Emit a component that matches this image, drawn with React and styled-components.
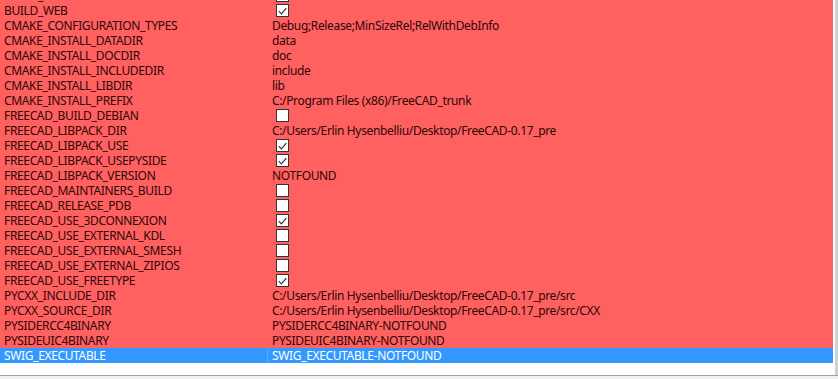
import React from "react";
import styled, { createGlobalStyle } from "styled-components";

const Global = createGlobalStyle`
  html, body { margin: 0; padding: 0; background: #f0f0f0; }
  body { font-family: "Noto Sans", "Open Sans", sans-serif; font-size: 12px; }
`;

const entries = [
  ["BUILD_VR", false],
  ["BUILD_WEB", true],
  ["CMAKE_CONFIGURATION_TYPES", "Debug;Release;MinSizeRel;RelWithDebInfo"],
  ["CMAKE_INSTALL_DATADIR", "data"],
  ["CMAKE_INSTALL_DOCDIR", "doc"],
  ["CMAKE_INSTALL_INCLUDEDIR", "include"],
  ["CMAKE_INSTALL_LIBDIR", "lib"],
  ["CMAKE_INSTALL_PREFIX", "C:/Program Files (x86)/FreeCAD_trunk"],
  ["FREECAD_BUILD_DEBIAN", false],
  ["FREECAD_LIBPACK_DIR", "C:/Users/Erlin Hysenbelliu/Desktop/FreeCAD-0.17_pre"],
  ["FREECAD_LIBPACK_USE", true],
  ["FREECAD_LIBPACK_USEPYSIDE", true],
  ["FREECAD_LIBPACK_VERSION", "NOTFOUND"],
  ["FREECAD_MAINTAINERS_BUILD", false],
  ["FREECAD_RELEASE_PDB", false],
  ["FREECAD_USE_3DCONNEXION", true],
  ["FREECAD_USE_EXTERNAL_KDL", false],
  ["FREECAD_USE_EXTERNAL_SMESH", false],
  ["FREECAD_USE_EXTERNAL_ZIPIOS", false],
  ["FREECAD_USE_FREETYPE", true],
  ["PYCXX_INCLUDE_DIR", "C:/Users/Erlin Hysenbelliu/Desktop/FreeCAD-0.17_pre/src"],
  ["PYCXX_SOURCE_DIR", "C:/Users/Erlin Hysenbelliu/Desktop/FreeCAD-0.17_pre/src/CXX"],
  ["PYSIDERCC4BINARY", "PYSIDERCC4BINARY-NOTFOUND"],
  ["PYSIDEUIC4BINARY", "PYSIDEUIC4BINARY-NOTFOUND"],
  ["SWIG_EXECUTABLE", "SWIG_EXECUTABLE-NOTFOUND"],
];

const Window = styled.div`
  width: 838px;
  height: 379px;
  overflow: hidden;
  background: #f0f0f0;
`;

const View = styled.div`
  display: flex;
  height: 375px;
  background: #ffffff;
  border-bottom: 1px solid #a0a0a0;
  overflow: hidden;
`;

const List = styled.div`
  width: 833px;
  margin-top: -12px;
`;

const Gap = styled.div`
  width: 2px;
  background: #ffffff;
`;

const Scroll = styled.div`
  flex: 1;
  background: #cdd2d2;
`;

const Row = styled.div`
  display: grid;
  grid-template-columns: 268px 1fr;
  height: 15px;
  line-height: 15px;
  letter-spacing: -0.35px;
  background: ${(p) => (p.$selected ? "#3399ff" : "#ff6161")};
  color: ${(p) => (p.$selected ? "#ffffff" : "#2e0606")};
  white-space: nowrap;
`;

const Name = styled.div`
  padding-left: 4px;
  overflow: hidden;
  border-right: 1px solid ${(p) => (p.$selected ? "#5aaaf5" : "transparent")};
`;

const Value = styled.div`
  padding-left: 4px;
  display: flex;
  align-items: center;
  overflow: hidden;
`;

const Box = styled.span`
  box-sizing: border-box;
  width: 13px;
  height: 13px;
  margin-left: 4px;
  background: #ffffff;
  border: 1px solid #333333;
  display: flex;
  align-items: center;
  justify-content: center;
`;

const Check = () => (
  <svg width="9" height="8" viewBox="0 0 9 8">
    <path d="M0.8 4.2 L3.4 6.8 L8.3 1.2" fill="none" stroke="#333" strokeWidth="1.2" />
  </svg>
);

const App = () => {
  return (
    <Window>
      <Global />
      <View>
        <List>
          {entries.map(([name, value], i) => {
            const selected = i === entries.length - 1;
            return (
              <Row key={name} $selected={selected}>
                <Name $selected={selected}>{name}</Name>
                <Value>
                  {typeof value === "boolean" ? <Box>{value && <Check />}</Box> : value}
                </Value>
              </Row>
            );
          })}
        </List>
        <Gap />
        <Scroll />
      </View>
    </Window>
  );
};

export default App;
